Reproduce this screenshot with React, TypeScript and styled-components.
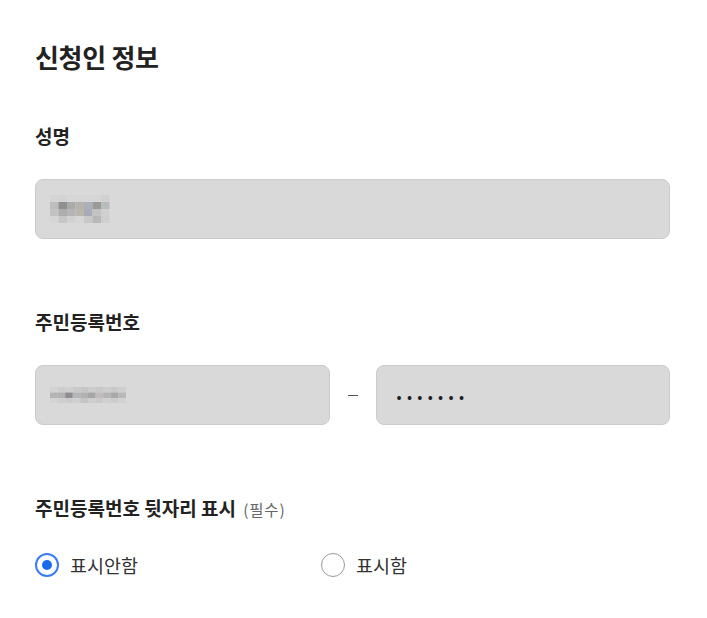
import React, { useState } from 'react';
import styled, { createGlobalStyle } from 'styled-components';

const GlobalStyle = createGlobalStyle`
  html, body {
    margin: 0;
    padding: 0;
    background: #ffffff;
  }
  body {
    font-family: 'Noto Sans CJK KR', 'Noto Sans', sans-serif;
    color: #222222;
  }
`;

const Page = styled.div`
  padding: 40px 37px 40px 35px;
`;

const Title = styled.h2`
  margin: 0 0 49px;
  font-size: 26px;
  line-height: 34px;
  font-weight: 700;
  color: #222222;
  letter-spacing: -0.3px;
`;

const Field = styled.div`
  margin-bottom: 70px;
`;

const Label = styled.div`
  font-size: 19px;
  line-height: 26px;
  font-weight: 700;
  color: #222222;
  margin-bottom: 30px;
`;

const Hint = styled.span`
  font-size: 15.5px;
  font-weight: 400;
  color: #666666;
  margin-left: 3px;
  letter-spacing: 0.8px;
`;

const Box = styled.div`
  flex: 1;
  height: 60px;
  box-sizing: border-box;
  background: #d9d9d9;
  border: 1px solid #cbcbcb;
  border-radius: 8px;
  display: flex;
  align-items: center;
  padding: 0 20px 0 14px;
`;

const Row = styled.div`
  display: flex;
  align-items: center;
`;

const Dash = styled.span`
  width: 46px;
  display: flex;
  justify-content: center;

  &::before {
    content: '';
    width: 10px;
    height: 1px;
    background: #555555;
  }
`;

const Dots = styled.span`
  font-size: 15px;
  letter-spacing: 5.3px;
  color: #1f1f2a;
  padding-left: 6px;
`;

const Radios = styled.div`
  display: grid;
  grid-template-columns: 286px 1fr;
  margin-top: 2px;
`;

const RadioItem = styled.label`
  display: flex;
  align-items: center;
  gap: 11px;
  height: 26px;
  font-size: 18.5px;
  color: #333333;
  cursor: pointer;
`;

const Circle = styled.span<{ $on: boolean }>`
  width: 24px;
  height: 24px;
  flex-shrink: 0;
  box-sizing: border-box;
  border-radius: 50%;
  border: ${p => (p.$on ? '2px solid #3b7cf5' : '1.5px solid #9a9a9a')};
  display: flex;
  align-items: center;
  justify-content: center;

  &::after {
    content: '';
    width: 10px;
    height: 10px;
    border-radius: 50%;
    background: ${p => (p.$on ? '#1a6af0' : 'transparent')};
  }
`;

const mosaicName = [
  ['#d4d4d4', '#d3d3d3', '#d6d6d6', '#d6d6d6', '#d6d6d6', '#d6d6d6', '#d1d1d1'],
  ['#bdbdbd', '#8f9090', '#a9aba8', '#b7b3aa', '#aab0b8', '#9a9b96', '#b7bdbd'],
  ['#c2c2c2', '#adadad', '#b5b5b5', '#b9b6ae', '#a7acb6', '#c3c3c3', '#d0d0d0'],
  ['#d6d6d6', '#c6c6c6', '#d1d1d1', '#d6d6d6', '#c8c8c8', '#b8b8b8', '#cfcfcf']
];

const mosaicId = [
  ['#d2d2d2', '#cccccc', '#cfcfcf', '#c9c9c9', '#c5c5c5', '#cdcdcd', '#c8c8c8', '#cdcdcd', '#c9c9c9', '#cfcfcf'],
  ['#b4b4b4', '#b2b2b2', '#8f8d92', '#b3b7ba', '#b1b1b1', '#a6a6a6', '#c0bcbc', '#b4b4b4', '#a8a8a8', '#b8b8b8'],
  ['#d3d3d3', '#cfcfcf', '#cccccc', '#d0d0d0', '#c4c4c4', '#cdcdcd', '#cacaca', '#d1d1d1', '#cccccc', '#d2d2d2']
];

const Mosaic: React.FC<{ cells: string[][]; w: number; h: number }> = ({ cells, w, h }) => (
  <svg width={cells[0].length * w} height={cells.length * h} style={{ display: 'block' }}>
    {cells.map((row, r) =>
      row.map((c, i) => <rect key={`${r}-${i}`} x={i * w} y={r * h} width={w} height={h} fill={c} />)
    )}
  </svg>
);

const App: React.FC = () => {
  const [show, setShow] = useState(false);

  return (
    <Page>
      <GlobalStyle />
      <Title>신청인 정보</Title>

      <Field>
        <Label>성명</Label>
        <Box>
          <Mosaic cells={mosaicName} w={8.5} h={7} />
        </Box>
      </Field>

      <Field>
        <Label>주민등록번호</Label>
        <Row>
          <Box>
            <Mosaic cells={mosaicId} w={7.6} h={5.5} />
          </Box>
          <Dash />
          <Box>
            <Dots>•••••••</Dots>
          </Box>
        </Row>
      </Field>

      <div>
        <Label>
          주민등록번호 뒷자리 표시 <Hint>(필수)</Hint>
        </Label>
        <Radios>
          <RadioItem onClick={() => setShow(false)}>
            <Circle $on={!show} />
            표시안함
          </RadioItem>
          <RadioItem onClick={() => setShow(true)}>
            <Circle $on={show} />
            표시함
          </RadioItem>
        </Radios>
      </div>
    </Page>
  );
};

export default App;
